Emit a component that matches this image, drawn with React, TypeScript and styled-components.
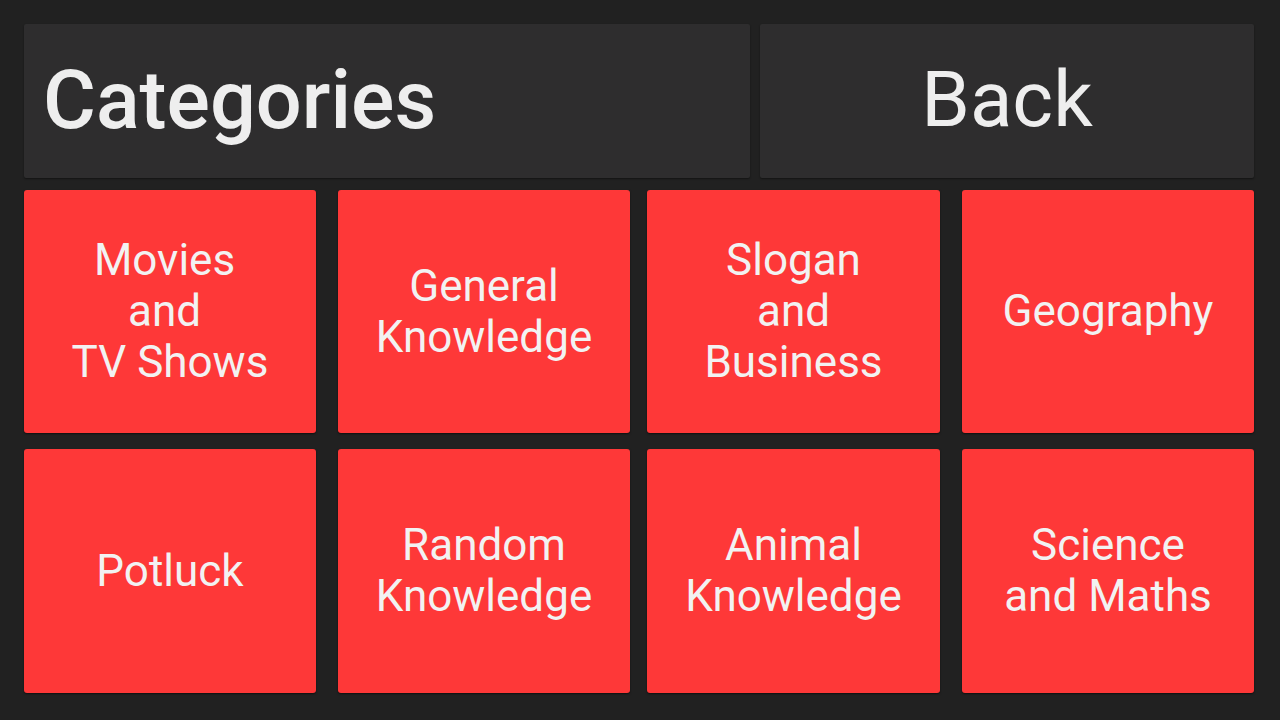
import React from "react";
import styled, { createGlobalStyle } from "styled-components";

const Global = createGlobalStyle`
  html, body { margin: 0; padding: 0; background: #212121; }
  body { font-family: Roboto, "Noto Sans", "Liberation Sans", sans-serif; }
  #root { width: 1280px; height: 720px; }
`;

const Page = styled.div`
  box-sizing: border-box;
  width: 1280px;
  height: 720px;
  padding: 24px 26px 27px 24px;
  display: flex;
  flex-direction: column;
  gap: 12px;
  background: #212121;
`;

const Header = styled.div`
  display: grid;
  grid-template-columns: 726px 494px;
  column-gap: 10px;
  height: 154px;
`;

const Panel = styled.div<{ $center?: boolean; $weight?: number; $size: number }>`
  display: flex;
  align-items: center;
  justify-content: ${(p) => (p.$center ? "center" : "flex-start")};
  padding-left: ${(p) => (p.$center ? "0" : "19px")};
  background: #2e2d2e;
  border-radius: 2px;
  box-shadow: 0 1px 2px rgba(0, 0, 0, 0.45);
  color: #eeeeee;
  font-size: ${(p) => p.$size}px;
  font-weight: ${(p) => p.$weight ?? 400};
  line-height: 1;
  padding-bottom: 2px;
`;

const Grid = styled.div`
  display: grid;
  grid-template-columns: 292px 314px 310px 314px;
  grid-template-rows: 243px 244px;
  row-gap: 16px;
  & > :nth-child(4n + 2),
  & > :nth-child(4n + 4) {
    margin-left: 22px;
  }
  & > :nth-child(4n + 3) {
    margin-left: 17px;
  }
`;

const Tile = styled.div`
  display: flex;
  align-items: center;
  justify-content: center;
  text-align: center;
  background: #fe3838;
  border-radius: 3px;
  box-shadow: 0 1px 2px rgba(0, 0, 0, 0.55);
  color: #f2f2f2;
  font-size: 44px;
  line-height: 51px;
  white-space: pre;
`;

const tiles = [
  "Movies\u00a0\nand\u00a0\nTV Shows",
  "General\nKnowledge",
  "Slogan\nand\nBusiness",
  "Geography",
  "Potluck",
  "Random\nKnowledge",
  "Animal\nKnowledge",
  "Science\nand Maths",
];

export default function App() {
  return (
    <>
      <Global />
      <Page>
        <Header>
          <Panel $size={81} $weight={500}>Categories</Panel>
          <Panel $size={78} $center>Back</Panel>
        </Header>
        <Grid>
          {tiles.map((t) => (
            <Tile key={t}>{t}</Tile>
          ))}
        </Grid>
      </Page>
    </>
  );
}
